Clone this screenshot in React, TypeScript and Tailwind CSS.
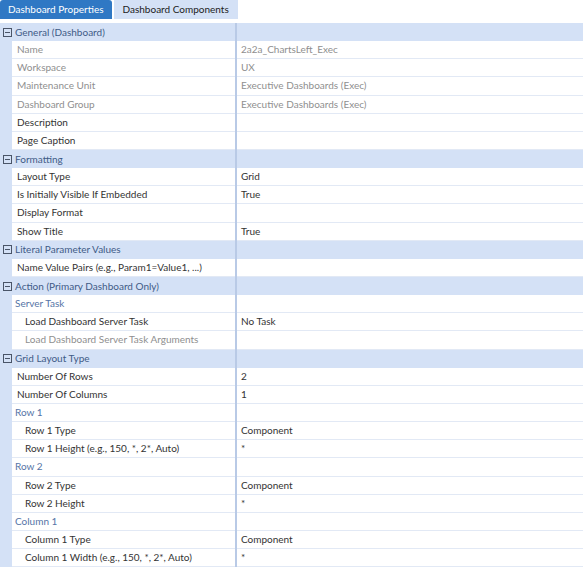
import React from 'react'

type Row =
  | { kind: 'cat'; label: string }
  | { kind: 'sub'; label: string }
  | { kind: 'prop'; label: string; value?: string; muted?: boolean; indent?: boolean }

const rows: Row[] = [
  { kind: 'cat', label: 'General (Dashboard)' },
  { kind: 'prop', label: 'Name', value: '2a2a_ChartsLeft_Exec', muted: true },
  { kind: 'prop', label: 'Workspace', value: 'UX', muted: true },
  { kind: 'prop', label: 'Maintenance Unit', value: 'Executive Dashboards (Exec)', muted: true },
  { kind: 'prop', label: 'Dashboard Group', value: 'Executive Dashboards (Exec)', muted: true },
  { kind: 'prop', label: 'Description' },
  { kind: 'prop', label: 'Page Caption' },
  { kind: 'cat', label: 'Formatting' },
  { kind: 'prop', label: 'Layout Type', value: 'Grid' },
  { kind: 'prop', label: 'Is Initially Visible If Embedded', value: 'True' },
  { kind: 'prop', label: 'Display Format' },
  { kind: 'prop', label: 'Show Title', value: 'True' },
  { kind: 'cat', label: 'Literal Parameter Values' },
  { kind: 'prop', label: 'Name Value Pairs (e.g., Param1=Value1, ...)' },
  { kind: 'cat', label: 'Action (Primary Dashboard Only)' },
  { kind: 'sub', label: 'Server Task' },
  { kind: 'prop', label: 'Load Dashboard Server Task', value: 'No Task', indent: true },
  { kind: 'prop', label: 'Load Dashboard Server Task Arguments', indent: true, muted: true },
  { kind: 'cat', label: 'Grid Layout Type' },
  { kind: 'prop', label: 'Number Of Rows', value: '2' },
  { kind: 'prop', label: 'Number Of Columns', value: '1' },
  { kind: 'sub', label: 'Row 1' },
  { kind: 'prop', label: 'Row 1 Type', value: 'Component', indent: true },
  { kind: 'prop', label: 'Row 1 Height (e.g., 150, *, 2*, Auto)', value: '*', indent: true },
  { kind: 'sub', label: 'Row 2' },
  { kind: 'prop', label: 'Row 2 Type', value: 'Component', indent: true },
  { kind: 'prop', label: 'Row 2 Height', value: '*', indent: true },
  { kind: 'sub', label: 'Column 1' },
  { kind: 'prop', label: 'Column 1 Type', value: 'Component', indent: true },
  { kind: 'prop', label: 'Column 1 Width (e.g., 150, *, 2*, Auto)', value: '*', indent: true },
]

function MinusBox() {
  return (
    <svg width="9" height="9" viewBox="0 0 9 9" className="block">
      <rect x="0.5" y="0.5" width="8" height="8" fill="none" stroke="#4a5568" />
      <line x1="2" y1="4.5" x2="7" y2="4.5" stroke="#4a5568" />
    </svg>
  )
}

function GridRow({ row }: { row: Row }) {
  if (row.kind === 'cat') {
    return (
      <div className="grid grid-cols-[12px_223px_2px_1fr] h-[18.15px] bg-[#d4e1f6]">
        <div className="flex items-center pl-[3px]">
          <MinusBox />
        </div>
        <div className="flex items-center pl-[3px] text-[#3f5b86] truncate">{row.label}</div>
        <div className="bg-[#b9cae6]" />
        <div />
      </div>
    )
  }
  if (row.kind === 'sub') {
    return (
      <div className="grid grid-cols-[12px_223px_2px_1fr] h-[18.15px]">
        <div className="bg-[#d4e1f6]" />
        <div className="flex items-center pl-[3px] text-[#5574a6] border-b border-[#e2e9f5]">{row.label}</div>
        <div className="bg-[#b9cae6]" />
        <div className="border-b border-[#e2e9f5]" />
      </div>
    )
  }
  const tone = row.muted ? 'text-[#8f8f8f]' : 'text-[#333333]'
  return (
    <div className="grid grid-cols-[12px_223px_2px_1fr] h-[18.15px]">
      <div className="bg-[#d4e1f6]" />
      <div
        className={`flex items-center ${row.indent ? 'pl-[13px]' : 'pl-[5px]'} ${tone} border-b border-[#e2e9f5] whitespace-nowrap overflow-hidden`}
      >
        {row.label}
      </div>
      <div className="bg-[#b9cae6]" />
      <div className={`flex items-center pl-[4px] ${tone} border-b border-[#e2e9f5] whitespace-nowrap`}>
        {row.value}
      </div>
    </div>
  )
}

export default function App() {
  return (
    <div className="w-[583px] h-[568px] overflow-hidden bg-white text-[10px] font-['Lato',sans-serif]">
      <div className="flex gap-[2px] h-[19px]">
        <div className="flex items-center px-[8px] rounded-t-[3px] bg-[#2f78c4] text-white">Dashboard Properties</div>
        <div className="flex items-center px-[9px] bg-[#d4e1f6] text-[#222]">Dashboard Components</div>
      </div>
      <div className="mt-[4px]">
        {rows.map((r, i) => (
          <GridRow key={i} row={r} />
        ))}
      </div>
    </div>
  )
}
